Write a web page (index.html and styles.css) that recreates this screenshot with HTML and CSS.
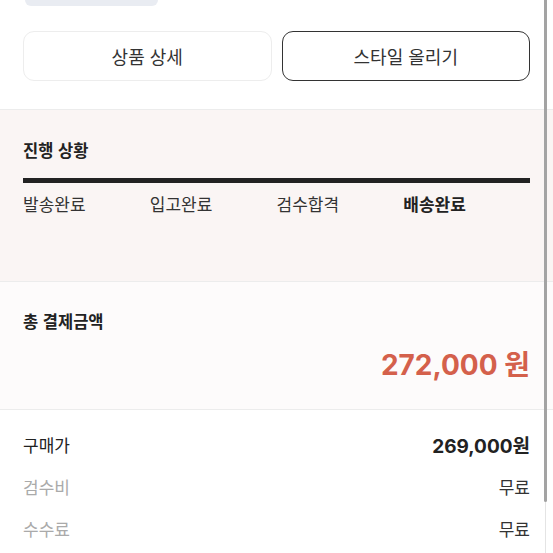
FILE: index.html
```html
<!DOCTYPE html>
<html lang="ko">
<head>
  <meta charset="UTF-8">
  <meta name="viewport" content="width=device-width, initial-scale=1.0">
  <title>구매 내역 상세</title>
  <link rel="stylesheet" href="styles.css">
</head>
<body>
  <div id="page">
    <section class="top-area">
      <div class="chip"></div>
      <div class="actions">
        <button type="button" class="btn">상품 상세</button>
        <button type="button" class="btn btn-dark">스타일 올리기</button>
      </div>
    </section>

    <section class="progress">
      <h2 class="section-title">진행 상황</h2>
      <div class="progress-bar"></div>
      <ul class="steps">
        <li>발송완료</li>
        <li>입고완료</li>
        <li>검수합격</li>
        <li class="current">배송완료</li>
      </ul>
    </section>

    <section class="total">
      <h2 class="section-title">총 결제금액</h2>
      <div class="total-amount">272,000 원</div>
    </section>

    <section class="breakdown">
      <div class="row">
        <span class="label strong">구매가</span>
        <span class="value price">269,000원</span>
      </div>
      <div class="row">
        <span class="label">검수비</span>
        <span class="value">무료</span>
      </div>
      <div class="row">
        <span class="label">수수료</span>
        <span class="value">무료</span>
      </div>
    </section>
  </div>

  <div class="scroll-track"></div>
  <div class="scroll-thumb"></div>
</body>
</html>
```

FILE: styles.css
```css
body {
  margin: 0;
  padding: 0;
  background-color: #fff;
  font-family: "Noto Sans CJK KR", "Noto Sans", sans-serif;
  color: #222;
  overflow: hidden;
}

#page {
  width: 553px;
}

.top-area {
  height: 110px;
  padding: 0 23px;
  box-sizing: border-box;
  border-bottom: 1px solid #ececec;
}

.chip {
  width: 133px;
  height: 6px;
  margin-left: 2px;
  background-color: #e9ecf2;
  border-radius: 0 0 8px 8px;
}

.actions {
  display: grid;
  grid-template-columns: 1fr 1fr;
  gap: 10px;
  margin-top: 25px;
}

.btn {
  height: 50px;
  background-color: #fff;
  border: 1px solid #ededed;
  border-radius: 11px;
  font-family: inherit;
  font-size: 18px;
  color: #333;
  cursor: pointer;
}

.btn-dark {
  border: 1.5px solid #333;
}

.progress {
  height: 172px;
  padding: 29px 23px 0;
  box-sizing: border-box;
  background-color: #faf5f4;
  border-bottom: 1px solid #ececec;
}

.section-title {
  margin: 0;
  font-size: 16.5px;
  line-height: 22px;
  font-weight: 700;
  color: #222;
}

.progress-bar {
  height: 5px;
  margin-top: 17px;
  background-color: #222;
}

.steps {
  display: grid;
  grid-template-columns: repeat(4, 1fr);
  margin: 10px 0 0;
  padding: 0;
  list-style: none;
}

.steps li {
  font-size: 17px;
  line-height: 22px;
  color: #333;
}

.steps .current {
  font-weight: 700;
  color: #222;
}

.total {
  height: 128px;
  padding: 28px 23px 0;
  box-sizing: border-box;
  background-color: #fdfbfb;
  border-bottom: 1px solid #ececec;
}

.total-amount {
  margin-top: 17px;
  text-align: right;
  font-family: Inter, "Noto Sans CJK KR", sans-serif;
  font-size: 28px;
  line-height: 32px;
  font-weight: 700;
  color: #d4604b;
}

.breakdown {
  padding: 13px 23px 0;
}

.row {
  display: flex;
  justify-content: space-between;
  align-items: center;
  height: 42px;
}

.label {
  font-size: 17px;
  color: #aaa;
}

.label.strong {
  color: #222;
}

.value {
  font-size: 17px;
  color: #333;
}

.value.price {
  font-family: Inter, "Noto Sans CJK KR", sans-serif;
  font-size: 19px;
  font-weight: 700;
  color: #222;
}

.scroll-track {
  position: fixed;
  top: 0;
  left: 545px;
  width: 1px;
  height: 100%;
  background-color: #e4e4e4;
}

.scroll-thumb {
  position: fixed;
  top: 0;
  left: 544px;
  width: 3px;
  height: 502px;
  background-color: #a3a3a3;
  border-radius: 0 0 2px 2px;
}
```
